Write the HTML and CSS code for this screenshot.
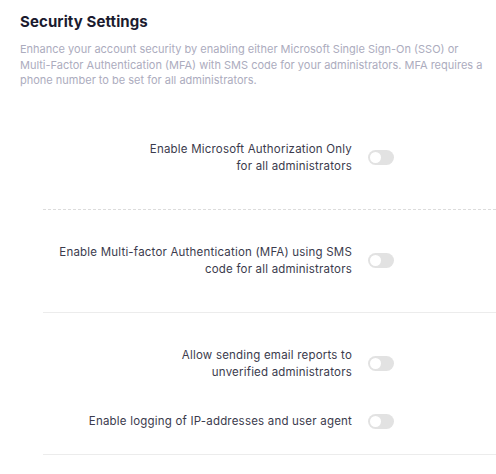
FILE: index.html
```html
<!DOCTYPE html>
<html lang="en">
<head>
<meta charset="utf-8">
<link rel="stylesheet" href="styles.css">
</head>
<body>
<div class="page">
  <h2 class="title">Security Settings</h2>
  <p class="desc">Enhance your account security by enabling either Microsoft Single Sign-On (SSO) or<br>Multi-Factor Authentication (MFA) with SMS code for your administrators. MFA requires a<br>phone number to be set for all administrators.</p>
  <div class="groups">
    <div class="group dashed">
      <div class="row">
        <div class="label">Enable Microsoft Authorization Only<br>for all administrators</div>
        <span class="toggle"><span class="knob"></span></span>
      </div>
    </div>
    <div class="group solid">
      <div class="row">
        <div class="label">Enable Multi-factor Authentication (MFA) using SMS<br>code for all administrators</div>
        <span class="toggle"><span class="knob"></span></span>
      </div>
    </div>
    <div class="group solid last">
      <div class="row">
        <div class="label">Allow sending email reports to<br>unverified administrators</div>
        <span class="toggle"><span class="knob"></span></span>
      </div>
      <div class="row">
        <div class="label">Enable logging of IP-addresses and user agent</div>
        <span class="toggle"><span class="knob"></span></span>
      </div>
    </div>
  </div>
</div>
</body>
</html>
```
FILE: styles.css
```css
html, body {
  margin: 0;
  padding: 0;
  background: #ffffff;
}
body {
  font-family: Inter, "Open Sans", "Liberation Sans", sans-serif;
  overflow: hidden;
}
.page {
  padding: 12px 0 0 20px;
}
.title {
  margin: 0;
  font-size: 15px;
  line-height: 20px;
  font-weight: 700;
  letter-spacing: 0.1px;
  color: #1b1b2f;
}
.desc {
  margin: 10px 0 0 0;
  width: 476px;
  font-size: 11px;
  line-height: 15.5px;
  letter-spacing: 0;
  color: #acacbe;
}
.groups {
  margin-left: 23px;
  margin-top: 52px;
}
.group {
  display: flex;
  flex-direction: column;
  gap: 32px;
  padding: 0 0 34px 0;
}
.group.dashed {
  border-bottom: 1px dashed #dcdcdc;
}
.group.solid {
  padding-top: 34px;
  border-bottom: 1px solid #ececec;
}
.group.last {
  padding-bottom: 24px;
}
.row {
  display: flex;
  align-items: center;
  gap: 16px;
}
.label {
  width: 309px;
  text-align: right;
  font-size: 11.5px;
  line-height: 17px;
  letter-spacing: 0.2px;
  color: #3b3b4d;
}
.toggle {
  flex: none;
  width: 26px;
  height: 15px;
  border-radius: 8px;
  background: #e2e2e2;
  display: flex;
  align-items: center;
  padding-left: 2px;
  box-sizing: border-box;
}
.knob {
  width: 11px;
  height: 11px;
  border-radius: 50%;
  background: #ffffff;
}
```
